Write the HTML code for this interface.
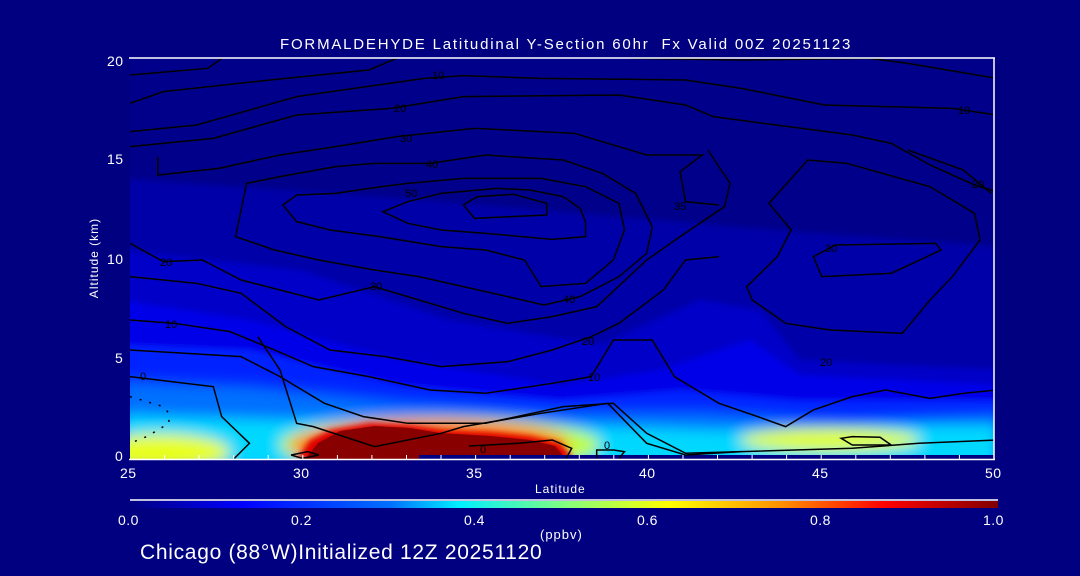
<!DOCTYPE html>
<html><head><meta charset="utf-8"><style>
html,body{margin:0;padding:0;background:#000080;}
body{width:1080px;height:576px;overflow:hidden;position:relative;font-family:"Liberation Sans",sans-serif;color:#fff;}
.t{position:absolute;font-size:13px;color:#fff;white-space:nowrap;letter-spacing:0.5px;}
</style></head><body>
<svg width="1080" height="576" style="position:absolute;left:0;top:0">
<defs>
<filter id="b" x="-20%" y="-20%" width="140%" height="140%"><feGaussianBlur stdDeviation="7"/></filter>
<filter id="b2" x="-20%" y="-20%" width="140%" height="140%"><feGaussianBlur stdDeviation="3"/></filter>
<clipPath id="pc"><rect x="130" y="58" width="864" height="401"/></clipPath>
<linearGradient id="cb" x1="0" x2="1">
<stop offset="0" stop-color="#000080"/><stop offset="0.13" stop-color="#0000ff"/>
<stop offset="0.3" stop-color="#0070ff"/><stop offset="0.38" stop-color="#00f0ff"/>
<stop offset="0.5" stop-color="#80ff80"/><stop offset="0.62" stop-color="#ffff00"/>
<stop offset="0.75" stop-color="#ff9000"/><stop offset="0.87" stop-color="#ff0000"/>
<stop offset="1" stop-color="#800000"/></linearGradient>
</defs>
<g clip-path="url(#pc)">
<rect x="130" y="58" width="864" height="401" fill="#00008a"/>
<g filter="url(#b2)">
<path d="M120,178 L400,198 L600,215 L800,232 L1000,246 L1000,470 L120,470Z" fill="#0000a8"/>
<path d="M120,250 L300,270 L450,320 L600,345 L700,300 L760,310 L800,360 L1000,370 L1000,470 L120,470Z" fill="#0000c8"/>
<path d="M120,300 L250,320 L400,360 L560,385 L660,370 L750,340 L800,375 L1000,385 L1000,470 L120,470Z" fill="#0000e8"/>
<path d="M120,345 L250,350 L400,385 L560,400 L680,390 L800,400 L1000,400 L1000,470 L120,470Z" fill="#0020ff"/>
</g>
<g filter="url(#b)">
<path d="M120,380 L250,385 L400,400 L560,410 L700,410 L850,418 L1000,412 L1000,470 L120,470Z" fill="#0070ff"/>
<path d="M120,415 L280,420 L400,418 L560,425 L720,430 L850,425 L1000,425 L1000,470 L120,470Z" fill="#00d8ff"/>
<ellipse cx="160" cy="452" rx="70" ry="18" fill="#e8ff20"/>
<ellipse cx="440" cy="445" rx="160" ry="28" fill="#c0ff40"/>
<ellipse cx="830" cy="440" rx="90" ry="12" fill="#e0ff30"/>
<ellipse cx="430" cy="446" rx="140" ry="26" fill="#ff8000"/>
</g>
<path d="M297,459 L310,440 L330,430 L370,423 L410,425 L445,430 L490,432 L530,436 L560,443 L574,459Z" fill="#e00000" filter="url(#b2)"/>
<path d="M305,459 L318,443 L340,431 L375,426 L410,428 L440,433 L490,436 L530,440 L555,446 L566,459Z" fill="#880000"/>
<rect x="419" y="455" width="580" height="5" fill="#000080"/>
<g fill="none" stroke="#000" stroke-width="1.5">
<g transform="translate(130,55) scale(0.5556,0.3333)">
<polyline vector-effect="non-scaling-stroke" points="0,60 140,40 165,10"/>
<polyline vector-effect="non-scaling-stroke" points="0,145 60,110 280,70 430,45 480,10"/>
<polyline vector-effect="non-scaling-stroke" points="0,230 120,210 300,125 530,70 600,62 740,70 1000,75 1100,100 1250,150 1480,160 1560,180"/>
<polyline vector-effect="non-scaling-stroke" points="900,10 1100,15 1330,10 1400,25 1560,70"/>
<polyline vector-effect="non-scaling-stroke" points="0,275 150,250 300,180 470,160 600,125 880,120 1000,150 1050,185 1300,240 1370,265 1440,330 1520,390 1560,410"/>
<polyline vector-effect="non-scaling-stroke" points="50,305 50,360 160,340 270,300 370,275 480,245 620,220 800,235 930,300 1030,300 990,350 1000,440 1060,450"/>
</g>
<g transform="translate(130,150) scale(0.5556,0.3333)">
<polygon vector-effect="non-scaling-stroke" points="600,165 625,140 690,133 750,160 750,195 620,205"/>
<polygon vector-effect="non-scaling-stroke" points="455,185 500,155 560,130 660,115 720,120 780,140 810,175 820,215 820,260 760,268 640,250 560,240 500,220"/>
<polygon vector-effect="non-scaling-stroke" points="275,165 300,135 370,130 430,115 500,100 600,85 740,85 820,110 880,160 890,240 870,330 820,400 740,410 710,330 640,300 560,290 450,260 360,240 300,215"/>
<polygon vector-effect="non-scaling-stroke" points="190,260 210,100 270,80 370,50 440,40 540,40 640,15 780,30 850,70 910,130 940,230 930,310 880,380 810,440 745,465 680,440 600,410 520,380 440,360 340,330 260,300"/>
<polyline vector-effect="non-scaling-stroke" points="0,280 60,335 130,330 200,390 340,450 440,410 500,440 600,490 680,520 760,500 840,470 930,330 990,260 1070,170 1080,100 1040,0"/>
<polyline vector-effect="non-scaling-stroke" points="0,380 120,400 200,430 280,530 360,600 460,620 560,650 680,635 760,600 830,560 880,520 960,420 1000,330 1060,320"/>
<polyline vector-effect="non-scaling-stroke" points="0,510 80,520 180,545 260,600 330,650 430,680 540,720 640,730 760,700 830,680 870,570 940,570 980,680 1060,760 1130,800 1180,830 1230,780 1300,740 1360,720 1440,745 1500,730 1560,720"/>
<polyline vector-effect="non-scaling-stroke" points="0,600 200,620 270,680 350,760 420,800 500,820 640,820 780,770 870,760 930,850 1000,910 1100,905 1300,895 1420,880 1560,870"/>
<polyline vector-effect="non-scaling-stroke" points="0,680 150,710 165,800 215,880 185,930"/>
<polyline vector-effect="non-scaling-stroke" points="230,560 270,660 300,820 330,830 440,890 560,850 600,830 740,790 860,760 930,880 1000,915 1100,905"/>
<polygon vector-effect="non-scaling-stroke" points="1230,320 1270,285 1450,280 1460,300 1370,370 1245,380"/>
<polygon vector-effect="non-scaling-stroke" points="1220,30 1290,40 1440,110 1520,190 1530,270 1480,380 1440,450 1390,550 1260,540 1180,520 1120,450 1110,410 1165,320 1190,240 1150,160"/>
<polyline vector-effect="non-scaling-stroke" points="1400,0 1500,60 1550,130"/>
<polygon vector-effect="non-scaling-stroke" points="1280,865 1300,860 1350,862 1370,885 1300,885"/>
<polygon vector-effect="non-scaling-stroke" points="290,915 320,905 340,915 310,925"/>
<polyline vector-effect="non-scaling-stroke" points="610,888 700,880 760,870 795,895 785,925"/>
<polyline vector-effect="non-scaling-stroke" points="840,925 840,900 870,900 890,905 880,925"/>
<polyline vector-effect="non-scaling-stroke" stroke-dasharray="2,8" points="0,740 60,770 70,790 70,820 30,860 0,880"/>
</g>
</g>
</g>
<g font-family="Liberation Sans,sans-serif" font-size="11" fill="#000">
<text x="432" y="79">10</text><text x="394" y="112">20</text><text x="400" y="142">30</text><text x="426" y="168">40</text>
<text x="405" y="197">50</text><text x="370" y="290">30</text><text x="160" y="266">20</text><text x="165" y="328">10</text>
<text x="140" y="380">0</text><text x="563" y="303">40</text><text x="582" y="345">20</text><text x="588" y="381">10</text>
<text x="825" y="252">30</text><text x="820" y="366">20</text><text x="958" y="114">10</text><text x="972" y="188">20</text>
<text x="604" y="449">0</text><text x="480" y="453">0</text><text x="674" y="210">35</text>
</g>
<g stroke="#fff" stroke-width="1.5" fill="none">
<line x1="129" y1="58" x2="995" y2="58"/>
<line x1="994" y1="58" x2="994" y2="460"/>
<line x1="129" y1="459.5" x2="995" y2="459.5"/>
<line x1="130" y1="500" x2="998" y2="500"/>
</g>
<g stroke="#fff" stroke-width="1">
<path d="M164.6,459v-4M199.1,459v-4M233.7,459v-4M268.2,459v-4M302.8,459v-4M337.4,459v-4M371.9,459v-4M406.5,459v-4M441,459v-4M475.6,459v-4M510.2,459v-4M544.7,459v-4M579.3,459v-4M613.8,459v-4M648.4,459v-4M683,459v-4M717.5,459v-4M752.1,459v-4M786.6,459v-4M821.2,459v-4M855.8,459v-4M890.3,459v-4M924.9,459v-4M959.4,459v-4"/>
</g>
<rect x="130" y="501" width="868" height="7" fill="url(#cb)"/>
</svg>
<div class="t" style="left:280px;top:36px;font-size:15px;letter-spacing:1.8px">FORMALDEHYDE Latitudinal Y-Section 60hr&nbsp; Fx Valid 00Z 20251123</div>
<div class="t" style="left:107px;top:53px;font-size:14px">20</div>
<div class="t" style="left:107px;top:151px;font-size:14px">15</div>
<div class="t" style="left:107px;top:251px;font-size:14px">10</div>
<div class="t" style="left:115px;top:350px;font-size:14px">5</div>
<div class="t" style="left:115px;top:448px;font-size:14px">0</div>
<div class="t" style="left:48px;top:251px;transform:rotate(-90deg);width:92px;text-align:center;font-size:12px;letter-spacing:1px">Altitude (km)</div>
<div class="t" style="left:120px;top:465px;font-size:14px">25</div>
<div class="t" style="left:293px;top:465px;font-size:14px">30</div>
<div class="t" style="left:466px;top:465px;font-size:14px">35</div>
<div class="t" style="left:639px;top:465px;font-size:14px">40</div>
<div class="t" style="left:812px;top:465px;font-size:14px">45</div>
<div class="t" style="left:985px;top:465px;font-size:14px">50</div>
<div class="t" style="left:535px;top:482px;font-size:12px;letter-spacing:1px">Latitude</div>
<div class="t" style="left:118px;top:512px;font-size:14px">0.0</div>
<div class="t" style="left:291px;top:512px;font-size:14px">0.2</div>
<div class="t" style="left:464px;top:512px;font-size:14px">0.4</div>
<div class="t" style="left:637px;top:512px;font-size:14px">0.6</div>
<div class="t" style="left:810px;top:512px;font-size:14px">0.8</div>
<div class="t" style="left:983px;top:512px;font-size:14px">1.0</div>
<div class="t" style="left:540px;top:527px;font-size:13px;letter-spacing:1px">(ppbv)</div>
<div class="t" style="left:140px;top:541px;font-size:21px;letter-spacing:0.7px">Chicago (88°W)Initialized 12Z 20251120</div>
</body></html>
